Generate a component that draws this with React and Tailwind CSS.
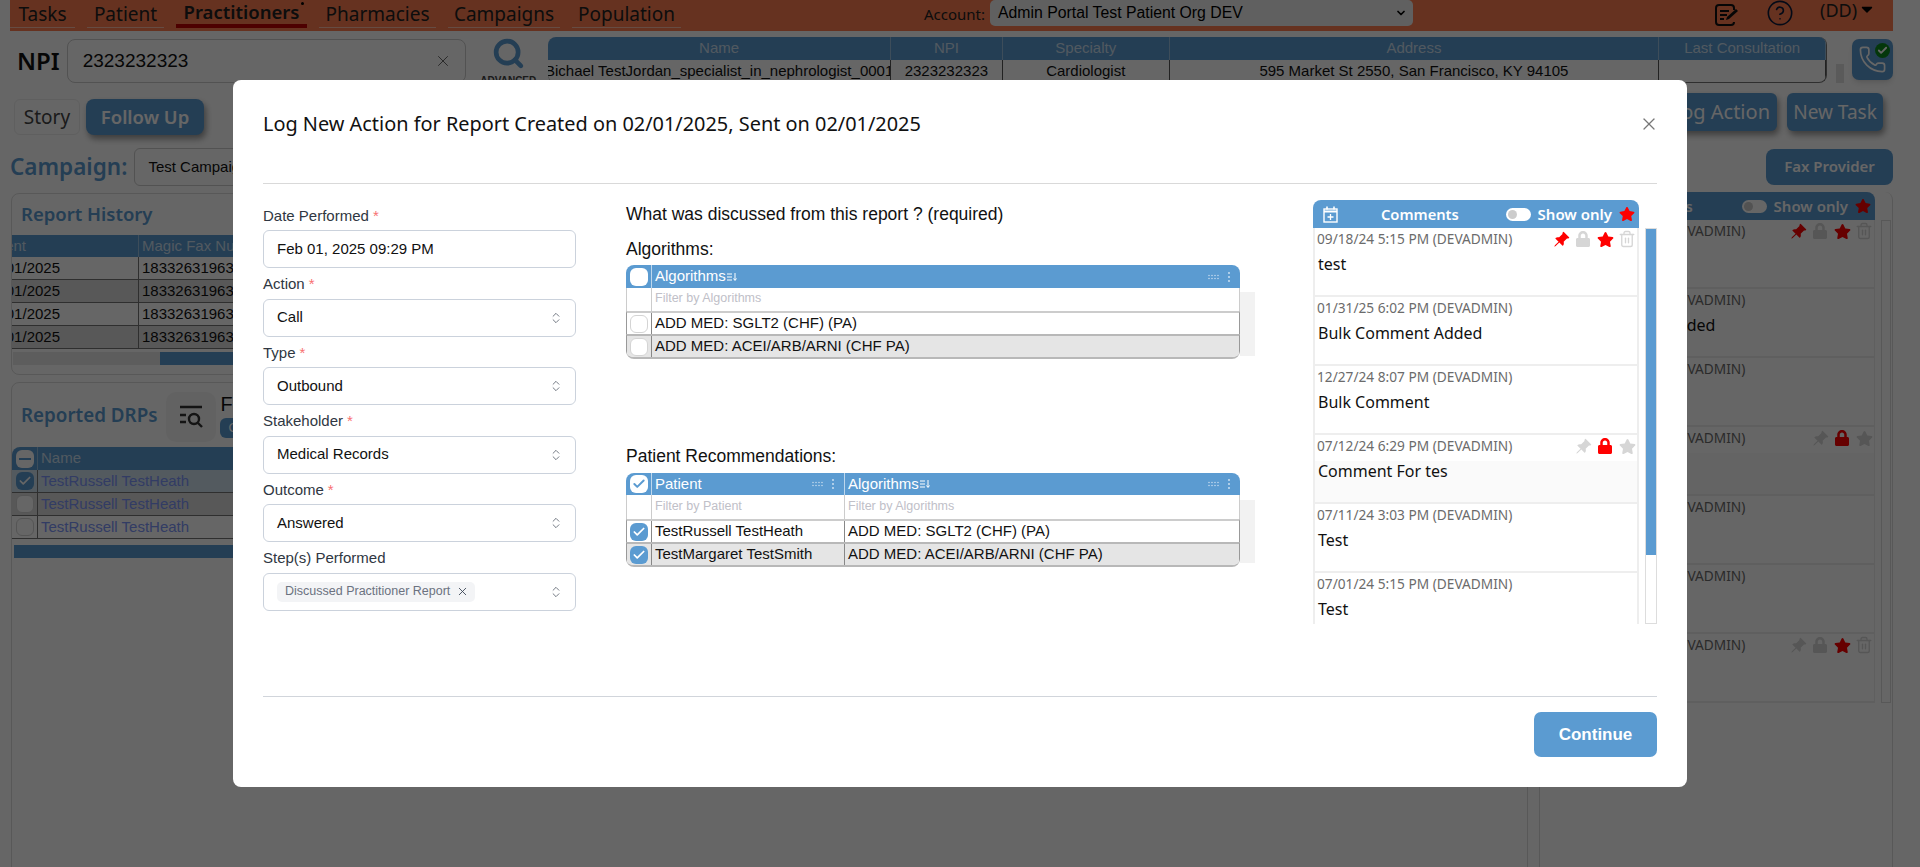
import React from "react";
import { Search, X, Phone, Check, ChevronsUpDown, Trash2, CircleHelp, ChevronDown } from "lucide-react";
import { FaStar, FaLock, FaCaretDown } from "react-icons/fa";
import { BsPinAngleFill } from "react-icons/bs";

const plex = "font-['Noto_Sans',sans-serif]";

const navItems = ["Tasks", "Patient", "Practitioners", "Pharmacies", "Campaigns", "Population"];
const navWidths = ["w-[65px]", "w-[77px]", "w-[131px]", "w-[117px]", "w-[112px]", "w-[109px]"];

const comments = [
  { date: "09/18/24 5:15 PM (DEVADMIN)", text: "test", pin: true, lock: false, star: true, trash: true },
  { date: "01/31/25 6:02 PM (DEVADMIN)", text: "Bulk Comment Added" },
  { date: "12/27/24 8:07 PM (DEVADMIN)", text: "Bulk Comment" },
  { date: "07/12/24 6:29 PM (DEVADMIN)", text: "Comment For tes", pin: false, lock: true, star: false, shaded: true },
  { date: "07/11/24 3:03 PM (DEVADMIN)", text: "Test" },
  { date: "07/01/24 5:15 PM (DEVADMIN)", text: "Test" },
  { date: "06/28/24 5:15 PM (DEVADMIN)", text: "", pin: false, lock: false, star: true, trash: true },
];

function NoteIcon() {
  return (
    <svg width="26" height="22" viewBox="0 0 26 22" fill="none" stroke="#111" strokeWidth="2">
      <path d="M20 6V4a3 3 0 0 0-3-3H5a3 3 0 0 0-3 3v14a3 3 0 0 0 3 3h12a3 3 0 0 0 3-3" />
      <path d="M6 7h9M6 11h7M6 15h4" />
      <path d="M12 16l1-3 9-8 2 2-9 8z" fill="#111" stroke="none" />
    </svg>
  );
}

function FilterListIcon() {
  return (
    <svg width="25" height="24" viewBox="0 0 25 24" fill="none" stroke="#333" strokeWidth="2.4">
      <path d="M1 2h22M1 10h6M1 17h6" />
      <circle cx="15" cy="14" r="5" />
      <path d="M19 18l4 4" />
    </svg>
  );
}

function CalendarIcon() {
  return (
    <svg width="15" height="17" viewBox="0 0 15 17" fill="none" stroke="#fff">
      <rect x="1" y="3" width="13" height="13" strokeWidth="1.4" />
      <path d="M1 5.5h13" strokeWidth="2" />
      <path d="M4 0.5v3M11 0.5v3" strokeWidth="1.6" />
      <path d="M7.5 8v6M4.5 11h6" strokeWidth="1.3" />
    </svg>
  );
}

function SortIcon() {
  return (
    <svg width="10" height="8" viewBox="0 0 10 8" fill="none" stroke="#fff" strokeWidth="1">
      <path d="M0 1h5M0 4h5M0 7h5M8 0v7M6.5 5.5L8 7.5l1.5-2" />
    </svg>
  );
}

function ColumnDots() {
  return (
    <svg width="24" height="10" viewBox="0 0 24 10" fill="#fff" opacity="0.75">
      <circle cx="1" cy="3.5" r=".7" /><circle cx="4" cy="3.5" r=".7" /><circle cx="7" cy="3.5" r=".7" /><circle cx="10" cy="3.5" r=".7" />
      <circle cx="1" cy="6.5" r=".7" /><circle cx="4" cy="6.5" r=".7" /><circle cx="7" cy="6.5" r=".7" /><circle cx="10" cy="6.5" r=".7" />
      <circle cx="21" cy="1" r=".9" /><circle cx="21" cy="5" r=".9" /><circle cx="21" cy="9" r=".9" />
    </svg>
  );
}

function Box({ kind = "empty" }) {
  if (kind === "checked") {
    return (
      <span className="flex h-[18px] w-[18px] items-center justify-center rounded-[6px] bg-[#5b9bd1]">
        <Check size={14} strokeWidth={3} className="text-white" />
      </span>
    );
  }
  if (kind === "header-checked") {
    return (
      <span className="flex h-[18px] w-[18px] items-center justify-center rounded-[6px] bg-white">
        <Check size={14} strokeWidth={3.4} className="text-[#5b9bd1]" />
      </span>
    );
  }
  if (kind === "header-minus") {
    return (
      <span className="flex h-[18px] w-[18px] items-center justify-center rounded-[6px] bg-white">
        <span className="h-[2px] w-[12px] bg-[#5b9bd1]" />
      </span>
    );
  }
  if (kind === "header") {
    return <span className="h-[18px] w-[18px] rounded-[6px] bg-white" />;
  }
  return <span className="h-[18px] w-[18px] rounded-[6px] border border-[#d4d4d4] bg-white" />;
}

function RowIcon({ children }) {
  return <span className="flex w-[22px] justify-center">{children}</span>;
}

function CommentRow({ c }) {
  return (
    <div className={`h-[69px] shrink-0 border-b-2 border-[#eeeeee] ${c.shaded ? "bg-[linear-gradient(#fff_26px,#fafafa_26px)]" : ""}`}>
      <div className="flex h-[22px] items-center justify-between pl-[2px]">
        <span className={`${plex} text-[13.7px] leading-none text-[#6b6b6b] whitespace-nowrap`}>{c.date}</span>
        {c.pin !== undefined && (
          <span className="-mr-[1px] flex items-center">
            <RowIcon><BsPinAngleFill size={17} className={c.pin ? "text-[#ff0000]" : "text-[#d6d6d6]"} /></RowIcon>
            <RowIcon><FaLock size={16} className={c.lock ? "text-[#ff0000]" : "text-[#d6d6d6]"} /></RowIcon>
            <RowIcon><FaStar size={17} className={c.star ? "text-[#ff0000]" : "text-[#d6d6d6]"} /></RowIcon>
            {c.trash && <RowIcon><Trash2 size={18} strokeWidth={1.8} className="text-[#d6d6d6]" /></RowIcon>}
          </span>
        )}
      </div>
      <div className={`${plex} pl-[3px] pt-[2px] text-[16px] leading-[24px] text-[#111]`}>{c.text}</div>
    </div>
  );
}

function CommentsHeader() {
  return (
    <div className="flex h-[28px] items-center rounded-t-[8px] bg-[#5b9bd1] pl-[10px] pr-[4px] text-white">
      <CalendarIcon />
      <span className={`${plex} ml-[43px] text-[14.7px] font-semibold`}>Comments</span>
      <span className="ml-auto flex h-[13px] w-[25px] items-center rounded-full bg-white pl-[2px]">
        <span className="h-[9px] w-[9px] rounded-full bg-[#cccccc]" />
      </span>
      <span className={`${plex} ml-[7px] text-[15px] font-semibold`}>Show only</span>
      <FaStar size={16} className="ml-[7px] text-[#ff0000]" />
    </div>
  );
}

function Field({ label, required, children }) {
  return (
    <div>
      <div className="flex h-[16px] items-center text-[15px] leading-none text-[#2f3742]">
        {label}
        {required && <span className="ml-[4px] text-[#f87171]">*</span>}
      </div>
      <div className="mt-[7px] flex h-[38px] items-center rounded-[6px] border border-[#cbd2dc] pl-[13px] pr-[12px] text-[15px] text-[#111]">
        {children}
      </div>
    </div>
  );
}

function Selector({ value }) {
  return (
    <>
      <span>{value}</span>
      <ChevronsUpDown size={14} strokeWidth={1.4} className="ml-auto text-[#555c68]" />
    </>
  );
}

function HeaderCell({ title, sort, className }) {
  return (
    <div className={`flex items-center border-r border-[#ffffff99] pl-[3px] pr-[8px] text-[15px] text-white ${className}`}>
      <span>{title}</span>
      {sort && <span className="ml-[1px]"><SortIcon /></span>}
      <span className="ml-auto"><ColumnDots /></span>
    </div>
  );
}

function AlgorithmTable() {
  return (
    <div className="relative">
      <div className="absolute -right-[15px] top-[27px] h-[64px] w-[15px] bg-[#f2f2f2]" />
      <div className="overflow-hidden rounded-[8px] border-b-2 border-[#b8b8b8]">
        <div className="flex h-[23px] bg-[#5b9bd1]">
          <div className="flex w-[26px] items-center justify-center border-r border-[#ffffff99]"><Box kind="header" /></div>
          <HeaderCell title="Algorithms" sort className="flex-1 border-r-0" />
        </div>
        <div className="flex h-[23px] border-x border-[#cccccc]">
          <div className="w-[25px] border-r border-[#cccccc]" />
          <div className="flex-1 pl-[3px] text-[12.5px] leading-[21px] text-[#c0c0c8]">Filter by Algorithms</div>
        </div>
        <div className="flex h-[23px] border-x border-t-2 border-[#cccccc] border-x-[#999999]">
          <div className="flex w-[25px] items-center justify-center border-r border-[#888888]"><Box /></div>
          <div className="flex-1 pl-[3px] text-[15px] leading-[20px] text-[#111]">ADD MED: SGLT2 (CHF) (PA)</div>
        </div>
        <div className="flex h-[23px] border-x border-t-2 border-[#b8b8b8] border-x-[#999999] bg-[#e5e5e5]">
          <div className="flex w-[25px] items-center justify-center border-r border-[#888888]"><Box /></div>
          <div className="flex-1 pl-[3px] text-[15px] leading-[20px] text-[#111]">ADD MED: ACEI/ARB/ARNI (CHF PA)</div>
        </div>
      </div>
    </div>
  );
}

function PatientTable() {
  return (
    <div className="relative">
      <div className="absolute -right-[15px] top-[27px] h-[63px] w-[15px] bg-[#f2f2f2]" />
      <div className="overflow-hidden rounded-[8px] border-b-2 border-[#b8b8b8]">
        <div className="flex h-[22px] bg-[#5b9bd1]">
          <div className="flex w-[26px] items-center justify-center border-r border-[#ffffff99]"><Box kind="header-checked" /></div>
          <HeaderCell title="Patient" className="w-[193px]" />
          <HeaderCell title="Algorithms" sort className="flex-1 border-r-0" />
        </div>
        <div className="flex h-[24px] border-x border-[#cccccc]">
          <div className="w-[25px] border-r border-[#cccccc]" />
          <div className="w-[193px] border-r border-[#cccccc] pl-[3px] text-[12.5px] leading-[23px] text-[#c0c0c8]">Filter by Patient</div>
          <div className="flex-1 pl-[3px] text-[12.5px] leading-[23px] text-[#c0c0c8]">Filter by Algorithms</div>
        </div>
        <div className="flex h-[23px] border-x border-t-2 border-[#cccccc] border-x-[#999999]">
          <div className="flex w-[25px] items-center justify-center border-r border-[#888888]"><Box kind="checked" /></div>
          <div className="w-[193px] border-r border-[#888888] pl-[3px] text-[15px] leading-[20px] text-[#111]">TestRussell TestHeath</div>
          <div className="flex-1 pl-[3px] text-[15px] leading-[20px] text-[#111]">ADD MED: SGLT2 (CHF) (PA)</div>
        </div>
        <div className="flex h-[23px] border-x border-t-2 border-[#b8b8b8] border-x-[#999999] bg-[#e5e5e5]">
          <div className="flex w-[25px] items-center justify-center border-r border-[#888888]"><Box kind="checked" /></div>
          <div className="w-[193px] border-r border-[#888888] pl-[3px] text-[15px] leading-[20px] text-[#111]">TestMargaret TestSmith</div>
          <div className="flex-1 pl-[3px] text-[15px] leading-[20px] text-[#111]">ADD MED: ACEI/ARB/ARNI (CHF PA)</div>
        </div>
      </div>
    </div>
  );
}

function Background() {
  const practitionerCols = [
    ["Name", "w-[343px]", "Bichael TestJordan_specialist_in_nephrologist_0001"],
    ["NPI", "w-[112px]", "2323232323"],
    ["Specialty", "w-[167px]", "Cardiologist"],
    ["Address", "w-[490px]", "595 Market St 2550, San Francisco, KY 94105"],
    ["Last Consultation", "w-[167px]", ""],
  ];
  return (
    <div className="ml-[10px] w-[1883px]">
      {/* Top nav */}
      <div className={`${plex} flex h-[31px] items-start bg-[#ff7d50] text-[19px] text-[#222]`}>
        <div className="flex gap-[12px]">
          {navItems.map((item, i) => (
            <div
              key={item}
              className={`relative flex h-[28px] items-center justify-center whitespace-nowrap ${navWidths[i]} ${item === "Practitioners" ? "border-b-[4px] border-[#c00000] text-[18.5px] font-semibold" : "border-b border-[#ffffff80] pt-[1px]"}`}
            >
              {item}
              {item === "Practitioners" && <span className="absolute right-[3px] top-[2px] h-[3px] w-[3px] rounded-full bg-black" />}
            </div>
          ))}
        </div>
        <span className="ml-[243px] mt-[3px] text-[15px]">Account:</span>
        <div className="ml-[5px] flex h-[26px] w-[423px] items-center rounded-[5px] bg-[#f0f0f0] pl-[8px] pr-[6px] font-['Liberation_Sans',sans-serif] text-[15.8px] text-black">
          Admin Portal Test Patient Org DEV
          <ChevronDown size={12} strokeWidth={3.5} className="ml-auto" />
        </div>
        <span className="ml-[301px] mt-[4px]"><NoteIcon /></span>
        <span className="ml-[26px] mt-[-1px]"><CircleHelp size={28} strokeWidth={1.4} className="text-[#0c1b3a]" /></span>
        <span className="ml-[26px] text-[18px] leading-[20px] text-[#222]">(DD)</span>
        <FaCaretDown size={18} className="ml-[1px] text-black" />
      </div>

      {/* NPI row */}
      <div className="mt-[6px] flex h-[46px] items-start">
        <span className={`${plex} ml-[7px] mr-[7px] mt-[9px] text-[24px] font-semibold leading-[30px] text-[#111]`}>NPI</span>
        <div className="mt-[2px] flex h-[44px] w-[400px] items-center rounded-[8px] border border-[#cccccc] pl-[15px] pr-[13px] font-['Liberation_Sans',sans-serif] text-[19px] text-[#111]">
          2323232323
          <X size={18} strokeWidth={1.3} className="ml-auto text-[#666]" />
        </div>
        <div className="ml-[14px] flex w-[56px] flex-col items-center">
          <Search size={33} strokeWidth={3.4} className="text-[#5b9bd1]" />
          <span className="mt-[3px] text-[10px] font-bold text-[#444]">ADVANCED</span>
        </div>
        <div className="ml-[12px] h-[46px] overflow-hidden rounded-[8px] border-r border-b border-[#777] text-[15px]">
          <div className="flex h-[23px] bg-[#5b9bd1] text-[#ffffffb0]">
            {practitionerCols.map(([h, w]) => (
              <div key={h} className={`flex items-center justify-center border-r border-[#ffffff60] ${w}`}>{h}</div>
            ))}
          </div>
          <div className="flex h-[22px] text-[#111]">
            {practitionerCols.map(([h, w, v]) => (
              <div key={h} className={`flex items-center justify-center overflow-hidden whitespace-nowrap border-r border-[#555] ${w}`}>{v}</div>
            ))}
          </div>
        </div>
        <div className="ml-[9px] mt-[27px] h-[19px] w-[8px] bg-[#e0e0e0]" />
        <div className="relative ml-[8px] mt-[2px] flex h-[41px] w-[41px] items-center justify-center rounded-[7px] bg-[#5b9bd1] shadow-md">
          <Phone size={29} strokeWidth={1.4} className="text-white" />
          <span className="absolute right-[3px] top-[4px] flex h-[15px] w-[15px] items-center justify-center rounded-full bg-[#0c8a1c]">
            <Check size={11} strokeWidth={4} className="text-white" />
          </span>
        </div>
      </div>

      {/* Buttons row */}
      <div className={`${plex} mt-[10px] flex h-[42px] items-start text-[19px]`}>
        <div className="ml-[4px] mt-[6px] flex h-[36px] w-[66px] items-center justify-center rounded-[6px] border border-[#eeeeee] text-[#444]">Story</div>
        <div className="ml-[6px] mt-[6px] flex h-[36px] w-[118px] items-center justify-center rounded-[8px] bg-[#5b9bd1] text-[18.5px] font-semibold text-white shadow-[2px_4px_6px_rgba(0,0,0,0.4)]">Follow Up</div>
        <div className="ml-auto flex h-[38px] w-[128px] items-center justify-end rounded-[6px] bg-[#5b9bd1] pr-[7px] text-[20px] text-white shadow-[2px_4px_6px_rgba(0,0,0,0.4)]">Log Action</div>
        <div className="ml-[10px] mr-[10px] flex h-[38px] w-[96px] items-center justify-center rounded-[6px] bg-[#5b9bd1] text-white shadow-[2px_4px_6px_rgba(0,0,0,0.4)]">New Task</div>
      </div>

      {/* Campaign row */}
      <div className="mt-[13px] flex h-[38px] items-center">
        <span className={`${plex} -mt-[1px] text-[22.5px] font-semibold text-[#5b9bd1]`}>Campaign:</span>
        <div className="ml-[7px] flex h-[38px] w-[300px] items-center rounded-[6px] border border-[#cccccc] pl-[13px] text-[15px] text-[#111]">Test Campaign</div>
        <div className={`${plex} ml-auto flex h-[36px] w-[127px] items-center justify-center rounded-[8px] bg-[#5b9bd1] pb-[1px] text-[15px] font-semibold text-white`}>Fax Provider</div>
      </div>

      {/* Panels */}
      <div className="mt-[7px] flex items-start">
        <div className="ml-[1px] w-[1517px]">
          <div className="h-[182px] rounded-[8px] border border-[#dddddd]">
            <div className={`${plex} flex h-[41px] items-center pb-[2px] pl-[9px] text-[18.5px] font-semibold text-[#5b9bd1]`}>Report History</div>
            <div className="flex h-[22px] bg-[#5b9bd1] text-[15px] text-[#ffffffb0]">
              <div className="flex w-[127px] items-center justify-end overflow-hidden border-r border-[#ffffff60] pr-[112px]">Sent</div>
              <div className="flex items-center pl-[3px]">Magic Fax Number</div>
            </div>
            {[0, 1, 2, 3].map((i) => (
              <div key={i} className={`flex h-[23px] border-b border-[#777] text-[15px] text-[#111] ${i % 2 ? "bg-[#dddddd]" : ""}`}>
                <div className="flex w-[127px] items-center justify-end overflow-hidden whitespace-nowrap border-r border-[#777] pr-[78px]">02/01/2025</div>
                <div className="flex items-center pl-[3px]">18332631963</div>
              </div>
            ))}
            <div className="mt-[3px] ml-[1px] flex h-[13px] bg-[#e8e8e8]">
              <div className="ml-[147px] flex-1 bg-[#5b9bd1]" />
            </div>
          </div>
          <div className="mt-[7px] h-[500px] rounded-[8px] border border-[#dddddd]">
            <div className="flex h-[64px] items-center">
              <span className={`${plex} pl-[9px] text-[18.8px] font-semibold text-[#5b9bd1]`}>Reported DRPs</span>
              <span className="ml-[9px] mt-[4px] flex h-[50px] w-[50px] items-center justify-center rounded-[10px] bg-[#f6f6f6]"><FilterListIcon /></span>
              <div className="ml-[4px] flex flex-col items-start">
                <span className="text-[20px] leading-[24px] text-[#111]">Filters</span>
                <span className="mt-[2px] flex h-[20px] items-center rounded-[6px] bg-[#5b9bd1] px-[8px] text-[13px] text-white">Open</span>
              </div>
            </div>
            <div className="flex h-[23px] overflow-hidden rounded-t-[8px] bg-[#5b9bd1] text-[15px] text-[#ffffffb0]">
              <div className="flex w-[26px] items-center justify-center border-r border-[#ffffff60]"><Box kind="header-minus" /></div>
              <div className="flex items-center pl-[3px]">Name</div>
            </div>
            {["checked", "empty", "empty"].map((kind, i) => (
              <div key={i} className={`flex h-[23px] border-b border-[#777] text-[15px] text-[#7d96fa] ${i === 0 ? "bg-[#cfe0ee]" : i === 1 ? "bg-[#dddddd]" : ""}`}>
                <div className="flex w-[26px] items-center justify-center border-r border-[#777]"><Box kind={kind} /></div>
                <div className="flex items-center pl-[3px]">TestRussell TestHeath</div>
              </div>
            ))}
            <div className="mt-[6px] ml-[2px] h-[13px] bg-[#5b9bd1]" />
          </div>
        </div>
        <div className="-mt-[1px] ml-[11px] h-[700px] w-[354px] rounded-[8px] border border-t-0 border-[#dddddd] pl-[7px] pr-[1px]">
          <div className="flex">
            <div className="w-[328px]">
              <CommentsHeader />
              {comments.map((c) => (
                <div key={c.date} className="border-x border-[#eeeeee]"><CommentRow c={c} /></div>
              ))}
            </div>
            <div className="ml-[6px] mt-[28px] w-[11px] flex-1 border border-[#dddddd]" />
          </div>
        </div>
      </div>
    </div>
  );
}

export default function App() {
  return (
    <div className="relative h-[867px] overflow-hidden bg-white font-['Liberation_Sans',sans-serif]">
      <Background />
      <div className="absolute inset-0 bg-black/60" />

      <div className="absolute left-[233px] top-[80px] flex h-[707px] w-[1454px] flex-col rounded-[8px] bg-white px-[30px]">
        <div className="flex h-[104px] items-start border-b border-[#d9d9d9] pt-[31px]">
          <h2 className={`${plex} text-[19.9px] leading-[26px] text-[#111]`}>Log New Action for Report Created on 02/01/2025, Sent on 02/01/2025</h2>
          <X size={20} strokeWidth={1.5} className="ml-auto mr-[-2px] mt-[3px] text-[#777]" />
        </div>

        <div className="flex flex-1 items-start">
          {/* form */}
          <div className="mt-[23px] flex w-[313px] flex-col gap-[7.5px]">
            <Field label="Date Performed" required>Feb 01, 2025 09:29 PM</Field>
            <Field label="Action" required><Selector value="Call" /></Field>
            <Field label="Type" required><Selector value="Outbound" /></Field>
            <Field label="Stakeholder" required><Selector value="Medical Records" /></Field>
            <Field label="Outcome" required><Selector value="Answered" /></Field>
            <Field label="Step(s) Performed">
              <span className="flex h-[20px] items-center rounded-[5px] bg-[#f3f4f6] pl-[8px] pr-[6px] text-[12.5px] text-[#6b7280]">
                Discussed Practitioner Report
                <X size={13} strokeWidth={1.6} className="ml-[6px] text-[#374151]" />
              </span>
              <ChevronsUpDown size={14} strokeWidth={1.4} className="ml-auto text-[#555c68]" />
            </Field>
          </div>

          {/* tables */}
          <div className="ml-[50px] mt-[19px] w-[614px]">
            <div className="text-[17.5px] leading-[22px] text-[#111]">What was discussed from this report ? (required)</div>
            <div className="mt-[13px] text-[17.5px] leading-[22px] text-[#111]">Algorithms:</div>
            <div className="mt-[5px]"><AlgorithmTable /></div>
            <div className="mt-[86px] text-[17.5px] leading-[22px] text-[#111]">Patient Recommendations:</div>
            <div className="mt-[6px]"><PatientTable /></div>
          </div>

          {/* comments */}
          <div className="ml-[73px] mt-[16px] flex h-[424px] w-[344px]">
            <div className="h-[424px] w-[326px] overflow-hidden">
              <CommentsHeader />
              <div className="border-x-2 border-[#eeeeee]">
                {comments.slice(0, 6).map((c) => <CommentRow key={c.date} c={c} />)}
              </div>
            </div>
            <div className="ml-[6px] mt-[28px] flex w-[12px] flex-col border border-[#dddddd] bg-white">
              <div className="h-[326px] bg-[#5b9bd1]" />
            </div>
          </div>
        </div>

        <div className="flex h-[91px] justify-end border-t border-[#d1d5db] pt-[15px]">
          <button className="h-[45px] w-[123px] rounded-[7px] bg-[#5b9bd1] text-[17px] font-bold text-white">Continue</button>
        </div>
      </div>
    </div>
  );
}
